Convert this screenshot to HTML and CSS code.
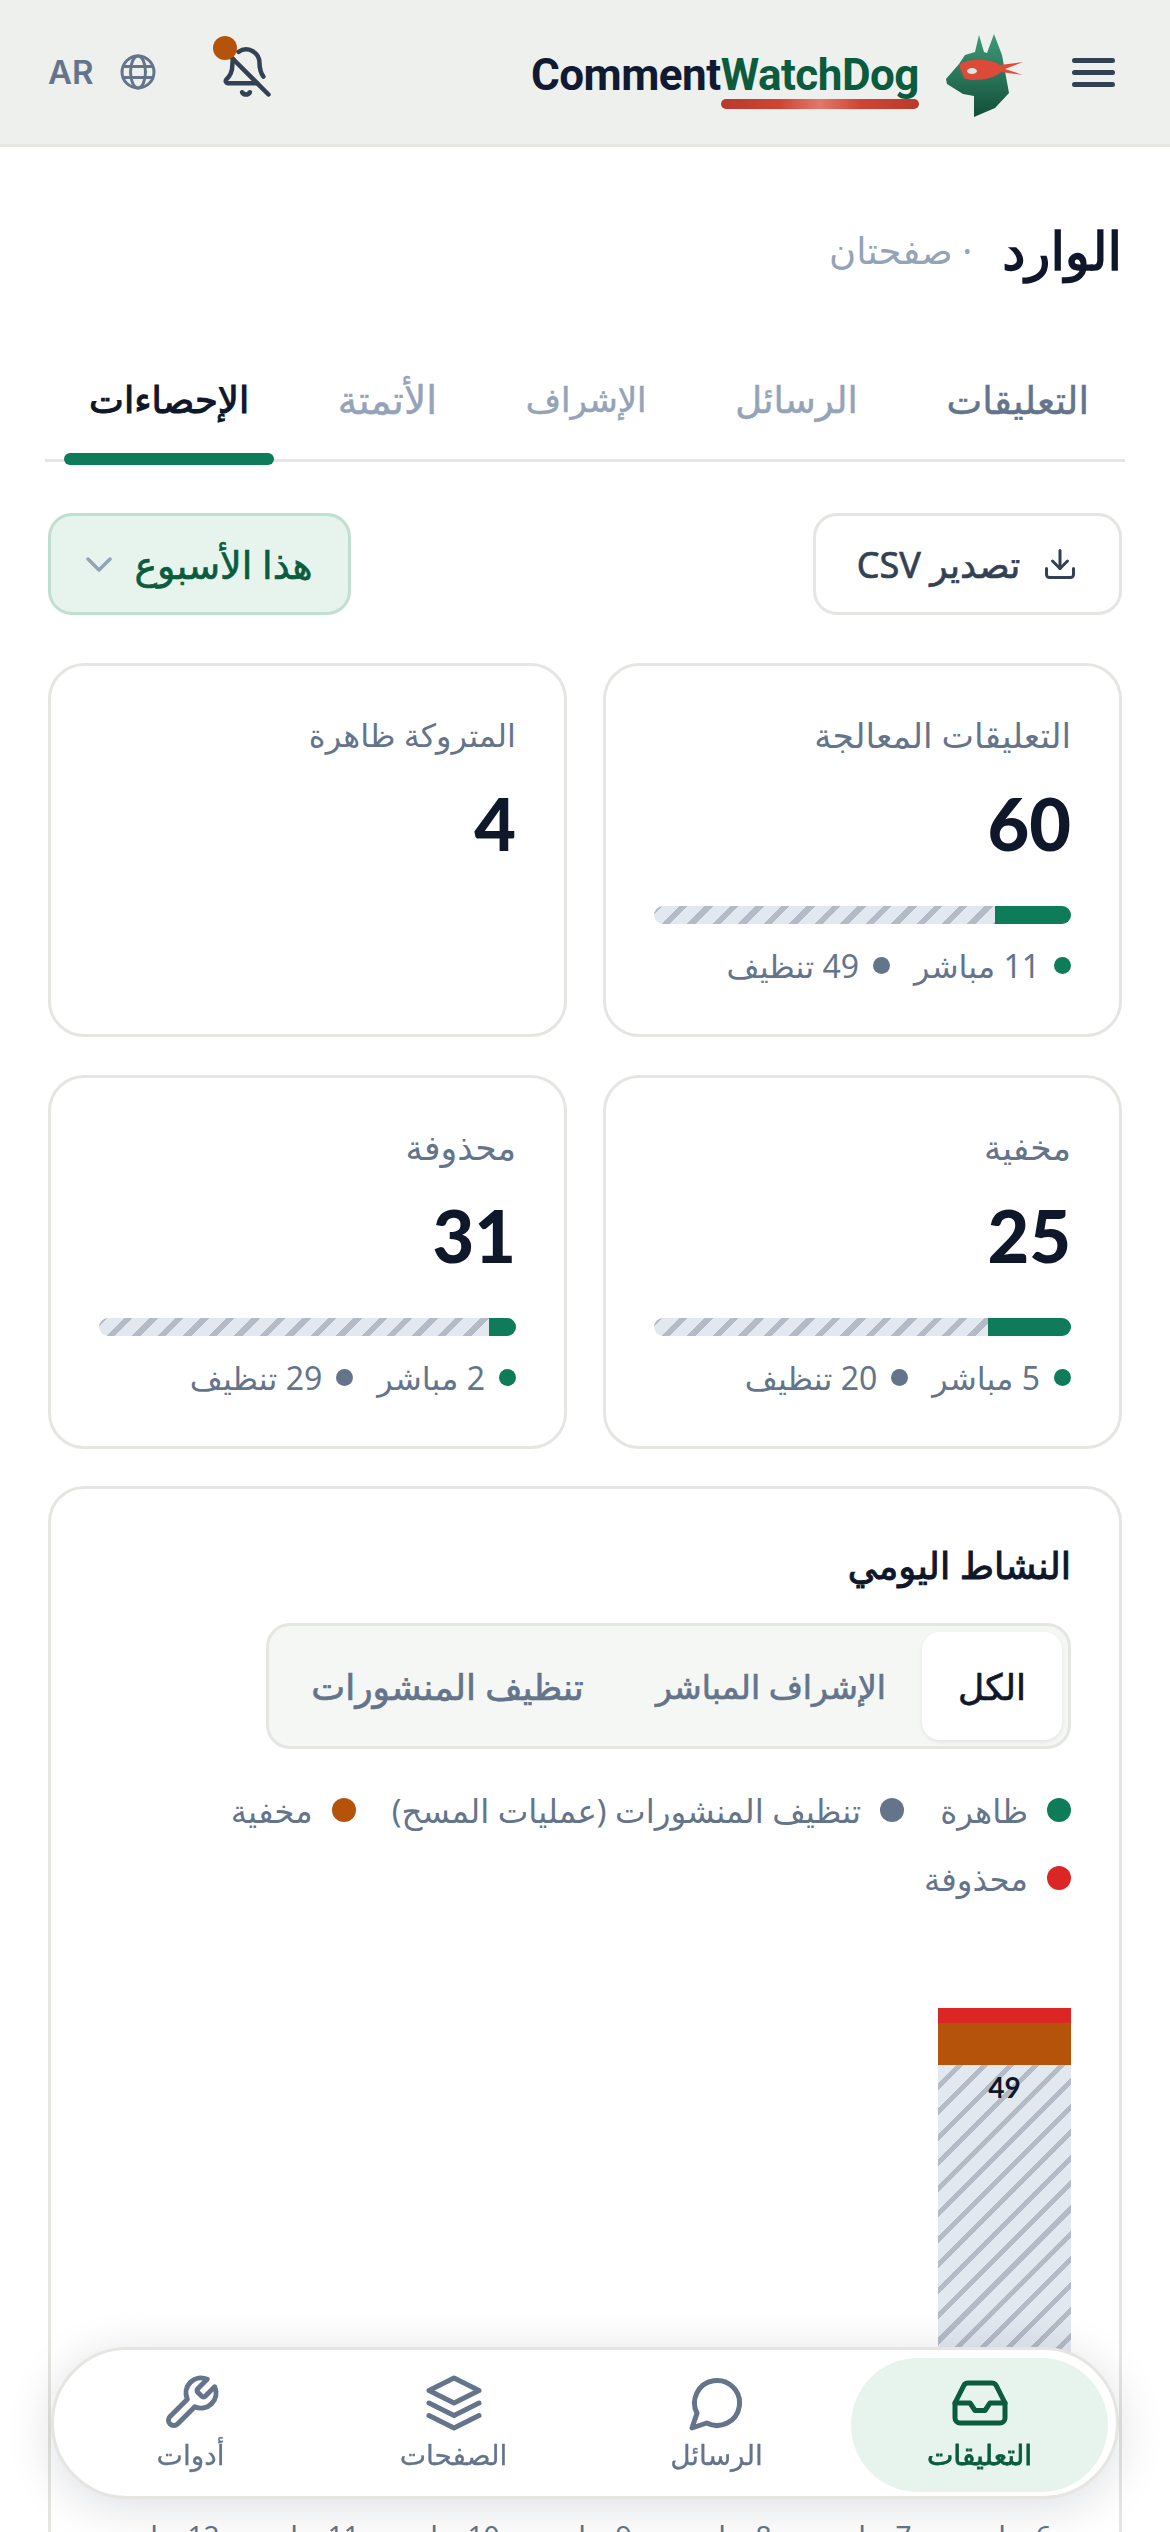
FILE: index.html
```html
<!DOCTYPE html>
<html lang="ar" dir="rtl">

<head>
  <meta charset="UTF-8" />
  <meta name="viewport" content="width=device-width, initial-scale=1" />
  <title>CommentWatchDog</title>
  <link rel="stylesheet" href="styles.css">
</head>

<body>
  <header class="topbar">
    <svg class="menu-icon" viewBox="0 0 43 29" width="43" height="29" fill="none" stroke="#334155" stroke-width="5" stroke-linecap="round">
      <path d="M2.5 2.5h38M2.5 14.5h38M2.5 26.5h38" />
    </svg>
    <svg class="dog" viewBox="0 0 78 83" width="78" height="83">
      <defs>
        <linearGradient id="dogFill" x1="0" y1="0" x2="0" y2="1">
          <stop offset="0" stop-color="#3f9a79" />
          <stop offset="0.5" stop-color="#2a7559" />
          <stop offset="1" stop-color="#114e38" />
        </linearGradient>
      </defs>
      <path d="M34 1l5 17 3 1 7-19 8 21 7 38-14 15-21 9V62l-11-2L2 50l-1-5 13-15 6-9 10-3z" fill="url(#dogFill)" />
      <path d="M14 31c6-6 30-8 41 0l23-3-18 7 18 6-22-3c-5 6-28 11-37 6z" fill="#dd4a38" />
      <ellipse cx="27" cy="37" rx="5" ry="3" fill="#dfe7e2" />
    </svg>
    <div class="logo"><span>Comment</span><span class="logo-green">WatchDog</span></div>
    <div class="bell-wrap">
      <svg viewBox="0 0 24 24" width="54" height="54" fill="none" stroke="#334155" stroke-width="2" stroke-linecap="round" stroke-linejoin="round">
        <path d="M10.268 21a2 2 0 0 0 3.464 0" />
        <path d="M17 17H4a1 1 0 0 1-.74-1.673C4.59 13.956 6 12.499 6 8a6 6 0 0 1 .258-1.742" />
        <path d="m2 2 20 20" />
        <path d="M8.668 3.01A6 6 0 0 1 18 8c0 2.687.77 4.653 1.707 6.05" />
      </svg>
      <span class="bell-dot"></span>
    </div>
    <div class="lang">
      <svg viewBox="0 0 36 36" width="36" height="36" fill="none" stroke="#64748b" stroke-width="3">
        <circle cx="18" cy="18" r="16" />
        <ellipse cx="18" cy="18" rx="7.5" ry="16" />
        <path d="M3 12.5h30M3 23.5h30" />
      </svg>
      <span>AR</span>
    </div>
  </header>

  <main class="page">
    <div class="title-row">
      <h1>الوارد</h1>
      <span class="subtitle">· صفحتان</span>
    </div>

    <nav class="tabs">
      <a class="tab tab-first">التعليقات</a>
      <a class="tab">الرسائل</a>
      <a class="tab tab-narrow">الإشراف</a>
      <a class="tab tab-wide">الأتمتة</a>
      <a class="tab tab-active">الإحصاءات</a>
    </nav>

    <div class="actions">
      <button class="btn-export">
        <svg viewBox="0 0 24 24" width="36" height="36" fill="none" stroke="#334155" stroke-width="2" stroke-linecap="round" stroke-linejoin="round">
          <path d="M21 15v4a2 2 0 0 1-2 2H5a2 2 0 0 1-2-2v-4" />
          <path d="M7 10l5 5 5-5" />
          <path d="M12 15V3" />
        </svg>
        تصدير CSV
      </button>
      <button class="btn-range">
        هذا الأسبوع
        <svg viewBox="0 0 26 15" width="26" height="15" fill="none" stroke="#94a3b8" stroke-width="3.5" stroke-linecap="round" stroke-linejoin="round">
          <path d="M2 2l11 11 11-11" />
        </svg>
      </button>
    </div>

    <section class="stats">
      <div class="stat-card">
        <div class="stat-label">التعليقات المعالجة</div>
        <div class="stat-num">60</div>
        <div class="bar"><span class="bar-live" style="width:18.3%"></span></div>
        <div class="bar-legend"><i class="dot dot-green"></i><span>11 مباشر</span><i class="dot dot-slate"></i><span>49 تنظيف</span></div>
      </div>
      <div class="stat-card">
        <div class="stat-label label-narrow">المتروكة ظاهرة</div>
        <div class="stat-num">4</div>
      </div>
      <div class="stat-card">
        <div class="stat-label">مخفية</div>
        <div class="stat-num">25</div>
        <div class="bar"><span class="bar-live" style="width:20%"></span></div>
        <div class="bar-legend"><i class="dot dot-green"></i><span>5 مباشر</span><i class="dot dot-slate"></i><span>20 تنظيف</span></div>
      </div>
      <div class="stat-card">
        <div class="stat-label">محذوفة</div>
        <div class="stat-num">31</div>
        <div class="bar"><span class="bar-live" style="width:6.5%"></span></div>
        <div class="bar-legend"><i class="dot dot-green"></i><span>2 مباشر</span><i class="dot dot-slate"></i><span>29 تنظيف</span></div>
      </div>
    </section>

    <section class="chart-card">
      <h2>النشاط اليومي</h2>
      <div class="segment">
        <span class="seg seg-on">الكل</span>
        <span class="seg seg-narrow">الإشراف المباشر</span>
        <span class="seg">تنظيف المنشورات</span>
      </div>
      <div class="chart-legend">
        <span class="leg"><i class="dot-lg dot-green"></i>ظاهرة</span>
        <span class="leg"><i class="dot-lg dot-slate"></i>تنظيف المنشورات (عمليات المسح)</span>
        <span class="leg"><i class="dot-lg dot-orange"></i>مخفية</span>
        <span class="leg"><i class="dot-lg dot-red"></i>محذوفة</span>
      </div>
      <div class="plot">
        <div class="column">
          <div class="col-red"></div>
          <div class="col-orange"></div>
          <div class="col-sweep">49</div>
        </div>
      </div>
      <div class="axis">
        <span>6 يوليو</span><span>7 يوليو</span><span>8 يوليو</span><span>9 يوليو</span><span>10 يوليو</span><span>11 يوليو</span><span>12 يوليو</span>
      </div>
    </section>
  </main>

  <nav class="bottom-nav">
    <a class="nav-item nav-on">
      <svg viewBox="0 0 24 24" width="60" height="60" fill="none" stroke="#0b5c3e" stroke-width="2" stroke-linecap="round" stroke-linejoin="round">
        <path d="M22 12h-6l-2 3h-4l-2-3H2" />
        <path d="M5.45 5.11 2 12v6a2 2 0 0 0 2 2h16a2 2 0 0 0 2-2v-6l-3.45-6.89A2 2 0 0 0 16.76 4H7.24a2 2 0 0 0-1.79 1.11z" />
      </svg>
      التعليقات
    </a>
    <a class="nav-item">
      <svg viewBox="0 0 24 24" width="60" height="60" fill="none" stroke="#64748b" stroke-width="2" stroke-linecap="round" stroke-linejoin="round">
        <path d="M7.9 20A9 9 0 1 0 4 16.1L2 22Z" />
      </svg>
      الرسائل
    </a>
    <a class="nav-item">
      <svg viewBox="0 0 24 24" width="60" height="60" fill="none" stroke="#64748b" stroke-width="2" stroke-linecap="round" stroke-linejoin="round">
        <path d="M12 2 2 7l10 5 10-5z" />
        <path d="m2 17 10 5 10-5" />
        <path d="m2 12 10 5 10-5" />
      </svg>
      الصفحات
    </a>
    <a class="nav-item">
      <svg viewBox="0 0 24 24" width="60" height="60" fill="none" stroke="#64748b" stroke-width="2" stroke-linecap="round" stroke-linejoin="round">
        <path d="M14.7 6.3a1 1 0 0 0 0 1.4l1.6 1.6a1 1 0 0 0 1.4 0l3.77-3.77a6 6 0 0 1-7.94 7.94l-6.91 6.91a2.12 2.12 0 0 1-3-3l6.91-6.91a6 6 0 0 1 7.94-7.94l-3.76 3.76z" />
      </svg>
      أدوات
    </a>
  </nav>
</body>

</html>
```

FILE: styles.css
```css
* {
  box-sizing: border-box;
}

html,
body {
  margin: 0;
  height: 2532px;
  overflow: hidden;
}

body {
  background: #fff;
  font-family: 'Noto Sans', 'DejaVu Sans', sans-serif;
  color: #0f172a;
}

.topbar {
  display: flex;
  align-items: center;
  height: 147px;
  padding: 0 55px 0 48px;
  background: #edf0ec;
  border-bottom: 3px solid #e5e5e2;
}

.menu-icon {
  margin-left: 49px;
}

.dog {
  margin-left: 26px;
  margin-top: 6px;
}

.logo {
  direction: ltr;
  margin-top: 5px;
  font-family: 'Roboto', sans-serif;
  font-size: 44px;
  font-weight: 700;
  letter-spacing: -0.5px;
  color: #111a33;
}

.logo-green {
  position: relative;
  color: #0b5c3e;
}

.logo-green::after {
  content: "";
  position: absolute;
  left: 0;
  right: 0;
  bottom: -8px;
  height: 10px;
  border-radius: 5px;
  background: linear-gradient(90deg, #b83a2c, #d04535 30%, #e2786a 50%, #d04535 70%, #b83a2c);
}

.bell-wrap {
  position: relative;
  height: 54px;
  margin-right: auto;
  margin-left: 63px;
}

.bell-dot {
  position: absolute;
  top: -9px;
  left: -6px;
  width: 24px;
  height: 24px;
  border-radius: 50%;
  background: #b45309;
}

.lang {
  display: flex;
  align-items: center;
  gap: 26px;
  font-family: 'Inter', sans-serif;
  font-size: 33px;
  font-weight: 600;
  color: #64748b;
}

.page {
  padding: 0 48px;
}

.title-row {
  display: flex;
  align-items: center;
  gap: 30px;
  height: 138px;
  margin-top: 33px;
}

h1 {
  margin: 0;
  font-size: 52px;
  font-weight: 400;
  -webkit-text-stroke: 1.6px currentColor;
}

.subtitle {
  font-size: 37px;
  color: #94a3b8;
}

.tabs {
  display: flex;
  justify-content: space-between;
  align-items: center;
  height: 104px;
  margin: 40px -3px 0;
  padding: 0 36px 20px 44px;
  border-bottom: 3px solid #e5e5e2;
}

.tab {
  position: relative;
  font-size: 37px;
  font-weight: 400;
  -webkit-text-stroke: 0.5px currentColor;
  color: #94a3b8;
}

.tab-first {
  color: #64748b;
  font-size: 38px;
}

.tab-narrow {
  font-size: 34px;
}

.tab-wide {
  font-size: 39px;
}

.tab-active {
  color: #0f172a;
  -webkit-text-stroke: 1.1px currentColor;
}

.tab-active::after {
  content: "";
  position: absolute;
  left: -25px;
  right: -25px;
  bottom: -41px;
  height: 12px;
  border-radius: 6px;
  background: #0f7c59;
}

.actions {
  display: flex;
  justify-content: space-between;
  margin-top: 51px;
}

.actions button {
  display: flex;
  align-items: center;
  justify-content: center;
  gap: 22px;
  height: 102px;
  border-radius: 24px;
  font-family: inherit;
  font-size: 36px;
  font-weight: 400;
  -webkit-text-stroke: 0.7px currentColor;
}

.btn-export {
  width: 309px;
  background: #fff;
  border: 3px solid #e5e5e2;
  color: #334155;
}

.actions .btn-range {
  width: 303px;
  background: #e7f4ed;
  border: 3px solid #bfe0d0;
  font-size: 38px;
  color: #0b5c3e;
}

.stats {
  display: grid;
  grid-template-columns: 519px 519px;
  justify-content: space-between;
  row-gap: 38px;
  margin-top: 48px;
}

.stat-card {
  height: 374px;
  padding: 44px 48px 0;
  border: 3px solid #e5e5e2;
  border-radius: 36px;
}

.stat-label {
  height: 50px;
  font-size: 34.5px;
  line-height: 50px;
  color: #64748b;
}

.label-narrow {
  font-size: 32px;
}

.stat-num {
  height: 94px;
  margin-top: 16px;
  font-family: 'Lato', sans-serif;
  font-size: 72px;
  font-weight: 900;
  line-height: 94px;
}

.bar {
  height: 18px;
  margin-top: 36px;
  border-radius: 9px;
  overflow: hidden;
  background: repeating-linear-gradient(135deg, #b2bbc6 0 6px, #e2e8f0 6px 18px);
}

.bar-live {
  display: block;
  height: 100%;
  background: #0f7c59;
}

.bar-legend {
  display: flex;
  align-items: center;
  margin-top: 20px;
  font-size: 32px;
  color: #64748b;
}

.bar-legend span {
  margin-left: 24px;
}

.dot {
  width: 17px;
  height: 17px;
  margin-left: 14px;
  border-radius: 50%;
}

.dot-green {
  background: #0f7c59;
}

.dot-slate {
  background: #64748b;
}

.dot-orange {
  background: #b45309;
}

.dot-red {
  background: #dc2626;
}

.chart-card {
  height: 1200px;
  margin-top: 37px;
  padding: 51px 48px 0;
  border: 3px solid #e5e5e2;
  border-radius: 36px;
}

h2 {
  margin: 0;
  height: 50px;
  font-size: 37px;
  font-weight: 400;
  line-height: 50px;
  -webkit-text-stroke: 1px currentColor;
}

.segment {
  display: inline-flex;
  align-items: center;
  height: 126px;
  margin-top: 33px;
  padding: 6px;
  background: #f5f7f5;
  border: 3px solid #e5e5e2;
  border-radius: 24px;
  font-size: 36px;
  font-weight: 400;
  -webkit-text-stroke: 0.7px currentColor;
  white-space: nowrap;
  color: #64748b;
}

.seg {
  padding: 0 36px;
}

.seg-narrow {
  font-size: 33px;
}

.seg-on {
  display: flex;
  align-items: center;
  height: 108px;
  background: #fff;
  border-radius: 18px;
  color: #0f172a;
  box-shadow: 0 2px 4px rgba(15, 23, 42, 0.08);
}

.chart-legend {
  display: flex;
  flex-wrap: wrap;
  gap: 20px 36px;
  margin-top: 37px;
  font-size: 32.5px;
  color: #64748b;
}

.leg {
  display: flex;
  align-items: center;
  gap: 19px;
  height: 48px;
}

.dot-lg {
  width: 24px;
  height: 24px;
  border-radius: 50%;
}

.plot {
  display: flex;
  height: 460px;
  margin-top: 106px;
}

.column {
  width: 133px;
}

.col-red {
  height: 15px;
  background: #dc2626;
}

.col-orange {
  height: 42px;
  background: #b45309;
}

.col-sweep {
  height: 403px;
  padding-top: 5px;
  text-align: center;
  font-family: 'Lato', sans-serif;
  font-size: 28px;
  font-weight: 700;
  background: repeating-linear-gradient(135deg, #e2e8f0 0 13px, #b2bbc6 13px 18px);
}

.axis {
  display: grid;
  grid-template-columns: repeat(7, 140px);
  margin: 48px -12px 0 0;
  font-size: 28px;
  white-space: nowrap;
  text-align: center;
  color: #64748b;
}

.bottom-nav {
  position: fixed;
  left: 51px;
  right: 51px;
  top: 2347px;
  display: flex;
  gap: 6px;
  height: 152px;
  padding: 8px 8px 0;
  background: #fff;
  border: 3px solid #e5e5e2;
  border-radius: 76px;
  box-shadow: 0 8px 48px rgba(15, 23, 42, 0.14);
}

.nav-item {
  flex: 1;
  display: flex;
  flex-direction: column;
  align-items: center;
  gap: 2px;
  height: 134px;
  padding-top: 15px;
  font-size: 28px;
  line-height: 38px;
  -webkit-text-stroke: 0.3px currentColor;
  color: #64748b;
}

.nav-on {
  background: #e7f4ed;
  border-radius: 67px;
  color: #0b5c3e;
  -webkit-text-stroke: 0.8px currentColor;
}
```
